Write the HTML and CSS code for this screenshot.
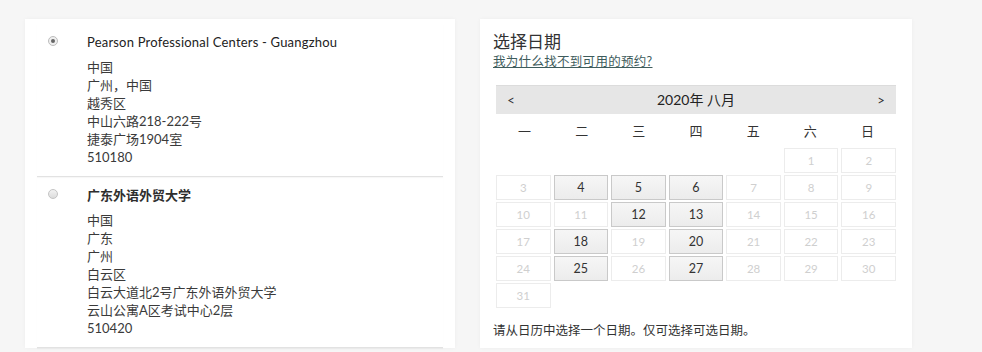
FILE: index.html
```html
<!DOCTYPE html>
<html lang="zh-CN">
<head>
<meta charset="utf-8">
<title>选择日期</title>
<link rel="stylesheet" href="styles.css">
</head>
<body>
<div class="page">
  <section class="card locations">
    <div class="loc">
      <span class="radio checked"></span>
      <div class="loc-body">
        <div class="loc-title latin">Pearson Professional Centers - Guangzhou</div>
        <div class="addr">
          <div>中国</div>
          <div>广州，中国</div>
          <div>越秀区</div>
          <div>中山六路218-222号</div>
          <div>捷泰广场1904室</div>
          <div>510180</div>
        </div>
      </div>
    </div>
    <div class="loc">
      <span class="radio"></span>
      <div class="loc-body">
        <div class="loc-title">广东外语外贸大学</div>
        <div class="addr">
          <div>中国</div>
          <div>广东</div>
          <div>广州</div>
          <div>白云区</div>
          <div>白云大道北2号广东外语外贸大学</div>
          <div>云山公寓A区考试中心2层</div>
          <div>510420</div>
        </div>
      </div>
    </div>
  </section>
  <section class="card datepick">
    <h2 class="dp-title">选择日期</h2>
    <a class="dp-link" href="#">我为什么找不到可用的预约?</a>
    <div class="cal">
      <div class="cal-head">
        <span class="nav">&lt;</span>
        <span class="month">2020年 八月</span>
        <span class="nav">&gt;</span>
      </div>
      <div class="weekdays">
        <span>一</span><span>二</span><span>三</span><span>四</span><span>五</span><span>六</span><span>日</span>
      </div>
      <div class="days">
        <span class="blank"></span><span class="blank"></span><span class="blank"></span><span class="blank"></span><span class="blank"></span>
        <span class="day">1</span><span class="day">2</span>
        <span class="day">3</span><span class="day on">4</span><span class="day on">5</span><span class="day on">6</span><span class="day">7</span><span class="day">8</span><span class="day">9</span>
        <span class="day">10</span><span class="day">11</span><span class="day on">12</span><span class="day on">13</span><span class="day">14</span><span class="day">15</span><span class="day">16</span>
        <span class="day">17</span><span class="day on">18</span><span class="day">19</span><span class="day on">20</span><span class="day">21</span><span class="day">22</span><span class="day">23</span>
        <span class="day">24</span><span class="day on">25</span><span class="day">26</span><span class="day on">27</span><span class="day">28</span><span class="day">29</span><span class="day">30</span>
        <span class="day">31</span>
      </div>
    </div>
    <p class="dp-note">请从日历中选择一个日期。仅可选择可选日期。</p>
  </section>
</div>
</body>
</html>
```

FILE: styles.css
```css
html, body {
  margin: 0;
  padding: 0;
  background: #f6f6f6;
}
body {
  font-family: "Lato", "Noto Sans CJK SC", sans-serif;
  color: #333;
  font-size: 13px;
  line-height: 18px;
  height: 352px;
  overflow: hidden;
}
.page {
  display: flex;
  gap: 25px;
  padding: 19px 0 0 25px;
}
.card {
  background: #fff;
  box-shadow: 0 0 4px rgba(0, 0, 0, 0.04);
}
.locations {
  width: 430px;
  padding: 5px 12px 0;
  box-sizing: border-box;
}
.loc {
  display: flex;
  padding: 9px 0 10px 11px;
  border-bottom: 1px solid #e2e2e2;
  box-shadow: 0 1px 1px rgba(0, 0, 0, 0.03);
}
.radio {
  width: 8px;
  height: 8px;
  border: 1px solid #c4c4c4;
  border-radius: 50%;
  background: linear-gradient(#f2f2f2, #dcdcdc);
  margin-top: 3px;
  flex: none;
  display: flex;
  align-items: center;
  justify-content: center;
}
.radio.checked {
  background: #efefef;
  border-color: #bdbdbd;
}
.radio.checked::after {
  content: "";
  width: 4px;
  height: 4px;
  border-radius: 50%;
  background: #666;
}
.loc-body {
  margin-left: 29px;
}
.loc-title {
  font-weight: 700;
  color: #2e2e2e;
  margin-bottom: 7px;
}
.loc-title.latin {
  font-weight: 400;
  color: #222;
  letter-spacing: 0.2px;
}
.addr {
  color: #3a3a3a;
}
.datepick {
  width: 432px;
  padding: 13px 16px 0 13px;
  box-sizing: border-box;
}
.dp-title {
  margin: 0;
  font-size: 17px;
  font-weight: 400;
  line-height: 20px;
  color: #333;
}
.dp-link {
  display: block;
  margin-top: 2px;
  color: #3e5c5c;
  font-size: 12.5px;
  line-height: 16px;
  text-decoration: underline;
  width: max-content;
  letter-spacing: 0.3px;
}
.cal {
  margin: 15px 0 0 3px;
  width: 400px;
}
.cal-head {
  display: flex;
  justify-content: space-between;
  align-items: center;
  height: 29px;
  background: #e6e6e6;
  border-top: 1px solid #dcdcdc;
  box-sizing: border-box;
  padding: 0 10px;
  font-size: 14px;
  color: #222;
}
.nav {
  font-size: 13px;
  color: #333;
  width: 10px;
  text-align: center;
}
.weekdays {
  display: grid;
  grid-template-columns: repeat(7, 1fr);
  height: 33px;
  align-items: center;
  text-align: center;
  font-size: 13px;
  color: #333;
}
.days {
  margin-top: 1px;
  display: grid;
  grid-template-columns: repeat(7, 1fr);
  column-gap: 3px;
  row-gap: 2px;
  grid-auto-rows: 25px;
}
.day {
  border: 1px solid #ececec;
  display: flex;
  align-items: center;
  justify-content: center;
  font-size: 11.5px;
  color: #cfcfcf;
}
.day.on {
  background: linear-gradient(#f6f6f6, #ececec);
  border-color: #c9c9c9;
  color: #333;
  font-size: 12.5px;
}
.dp-note {
  margin: 14px 0 0;
  font-size: 12.5px;
  color: #333;
}
```
